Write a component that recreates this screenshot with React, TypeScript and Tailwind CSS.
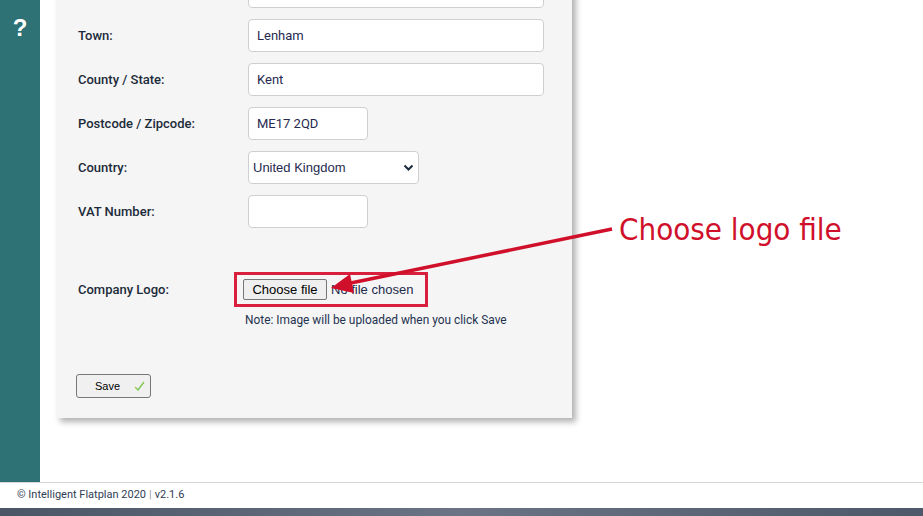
import React from "react";

const rows = [
  { label: "", value: "", w: "w-[296px]" },
  { label: "Town:", value: "Lenham", w: "w-[296px]" },
  { label: "County / State:", value: "Kent", w: "w-[296px]" },
  { label: "Postcode / Zipcode:", value: "ME17 2QD", w: "w-[120px]" },
];

function Row({ label, children }: { label: string; children: React.ReactNode }) {
  return (
    <div className="flex items-center h-[33px]">
      <div className="w-[170px] text-[13px] font-medium text-[#1c2b3a]">{label}</div>
      {children}
    </div>
  );
}

function TextBox({ value, w }: { value: string; w: string }) {
  return (
    <div
      className={`${w} h-[33px] bg-white border border-[#cfcfcf] rounded-[4px] flex items-center px-[8px] text-[13px] text-[#262a4f]`}
    >
      {value}
    </div>
  );
}

function App() {
  return (
    <div className="w-[923px] h-[516px] overflow-hidden relative flex flex-col bg-white font-['Roboto',sans-serif]">
      <div className="flex h-[482px]">
        <div className="w-[40px] bg-[#2e7276] flex justify-center pt-[15px]">
          <span className="text-white font-bold text-[24px] leading-[26px] font-['Liberation_Sans',sans-serif]">?</span>
        </div>
        <div className="flex-1 pl-[16px]">
          <div className="w-[516px] -mt-[60px] pt-[35px] pb-[20px] px-[22px] bg-[#f5f5f5] shadow-[4px_4px_6px_rgba(0,0,0,0.3)]">
            <div className="flex flex-col gap-[11px]">
              {rows.map((r, i) => (
                <Row key={i} label={r.label}>
                  <TextBox value={r.value} w={r.w} />
                </Row>
              ))}
              <Row label="Country:">
                <div className="relative w-[171px] h-[33px]">
                  <select
                    defaultValue="uk"
                    className="appearance-none w-full h-full bg-white border border-[#cfcfcf] rounded-[4px] pl-[4px] text-[13px] text-[#262a4f] font-['Liberation_Sans',sans-serif]"
                  >
                    <option value="uk">United Kingdom</option>
                  </select>
                  <svg
                    className="absolute right-[5px] top-[13px] pointer-events-none"
                    width="11"
                    height="8"
                    viewBox="0 0 11 8"
                  >
                    <path d="M1.5 1.5 L5.5 5.5 L9.5 1.5" stroke="#1c2b3a" strokeWidth="2" fill="none" />
                  </svg>
                </div>
              </Row>
              <Row label="VAT Number:">
                <TextBox value="" w="w-[120px]" />
              </Row>
            </div>

            <div className="flex items-center mt-[44px]">
              <div className="w-[156px] text-[13px] font-medium text-[#1c2b3a]">Company Logo:</div>
              <div className="w-[194px] h-[35px] border-[3px] border-[#d8203d] flex items-center pl-[6px] gap-[4px] font-['Liberation_Sans',sans-serif]">
                <button className="h-[21px] w-[84px] bg-[#efefef] border border-[#767676] rounded-[2px] text-[13px] text-black">
                  Choose file
                </button>
                <span className="text-[13px] text-[#1c2b4a]">No file chosen</span>
              </div>
            </div>
            <div className="ml-[167px] mt-[6px] text-[11.9px] leading-[14px] text-[#1f3350]">
              Note: Image will be uploaded when you click Save
            </div>

            <button className="mt-[47px] -ml-[2px] w-[75px] h-[24px] bg-[#f0f0f0] border border-[#777] rounded-[3px] flex items-center pl-[18px] gap-[14px] font-['Liberation_Sans',sans-serif]">
              <span className="text-[11px] text-black">Save</span>
              <svg width="11" height="10" viewBox="0 0 11 10">
                <defs>
                  <linearGradient id="chk" x1="0" y1="0" x2="1" y2="1">
                    <stop offset="0" stopColor="#e0d040" />
                    <stop offset="1" stopColor="#3cc060" />
                  </linearGradient>
                </defs>
                <path d="M1 6 L4 9 L10 1" stroke="url(#chk)" strokeWidth="1.4" fill="none" />
              </svg>
            </button>
          </div>
        </div>
      </div>

      <div className="h-[26px] border-t border-[#d8d8d8] bg-white flex items-center pl-[17px] text-[11px] text-[#2f3e55]">
        © Intelligent Flatplan 2020 <span className="mx-[3px] text-[#999]">|</span> v2.1.6
      </div>
      <div className="flex-1 bg-gradient-to-r from-[#4a5566] via-[#6a7484] to-[#4d586a]" />

      <svg className="absolute inset-0 pointer-events-none" width="923" height="516">
        <line x1="612" y1="229" x2="346" y2="284" stroke="#d0102b" strokeWidth="3.5" />
        <polygon points="331,288 350,274 354,293" fill="#d0102b" />
      </svg>
      <div className="absolute left-[619px] top-[211px] text-[31px] leading-[36px] text-[#d0102b] font-['DejaVu_Sans_Condensed','Liberation_Sans',sans-serif]">
        Choose logo file
      </div>
    </div>
  );
}

export default App;
